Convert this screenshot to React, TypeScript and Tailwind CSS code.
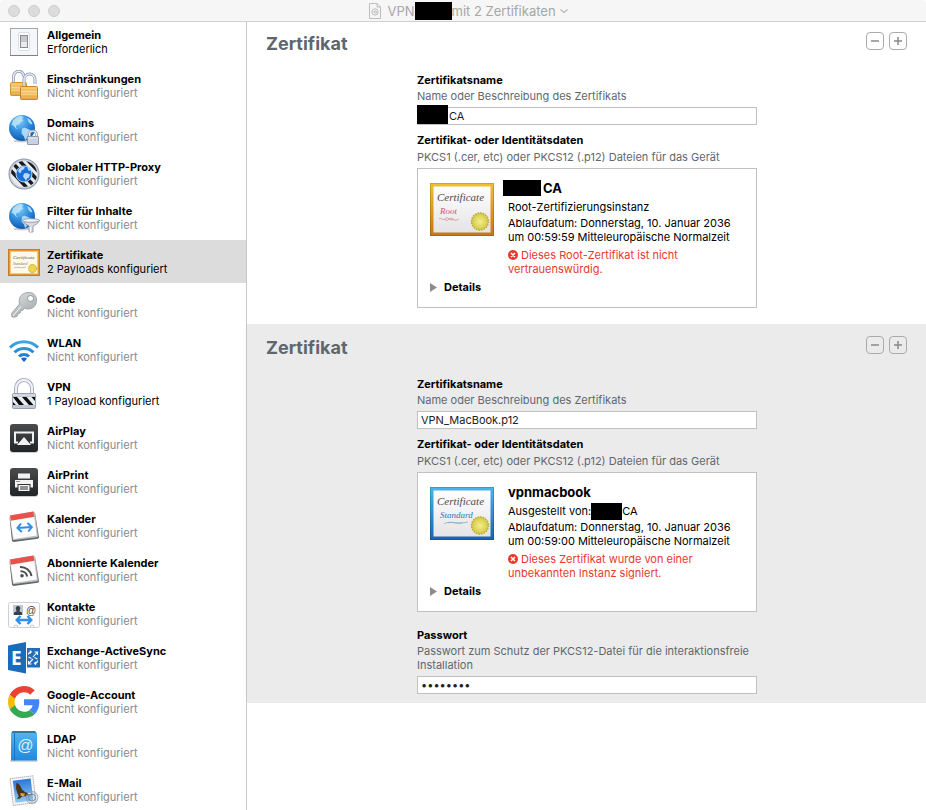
import type { ReactNode } from "react";

const continents =
  "M5 6.5c2-2.600 5-4.500 8-4.800l2.500 1.300-1.500 2 1.500 1.500-2.500 1.500-2 2.500-2.500.5-.5 2.500 2 1.500-2-.5-2.500-3-2-.5zM14 14.500l3-.8 4 1.800 2.500 1.500-1.500 3.500-2.500 1.500-1 3-1.500 1-1-3.500-2.500-3zM19 4l3 1.500 2.500 4-1.500 1-2.500-2.500z";

function Globe() {
  return (
    <>
      <defs>
        <radialGradient id="globe" cx="0.4" cy="0.25" r="0.8">
          <stop offset="0" stopColor="#7ccbf8" />
          <stop offset="0.5" stopColor="#2f8bdc" />
          <stop offset="1" stopColor="#0f55a8" />
        </radialGradient>
      </defs>
      <ellipse cx="14" cy="27" rx="9" ry="1.500" fill="#000" opacity="0.2" />
      <circle cx="14" cy="14" r="13" fill="url(#globe)" />
      <path d={continents} fill="#b9e2fb" opacity="0.9" />
    </>
  );
}

function GeneralIcon() {
  return (
    <>
      <rect x="2.500" y="2.500" width="27" height="27" fill="#f5f6f9" stroke="#a6a8ad" />
      <path d="M2 29.500h28" stroke="#7d7f84" />
      <rect x="10.500" y="6.500" width="11" height="18" rx="1.500" fill="#fdfdfd" stroke="#dcdde0" />
      <rect x="12.500" y="9.500" width="7" height="12" fill="#c5c9cc" stroke="#8a8d90" />
      <path d="M13 16h6v5h-6z" fill="#e8eaeb" />
    </>
  );
}

function RestrictionsIcon() {
  return (
    <>
      <defs>
        <linearGradient id="gold" x2="0" y2="1">
          <stop offset="0" stopColor="#f9c45c" />
          <stop offset="0.5" stopColor="#fddc94" />
          <stop offset="1" stopColor="#e69f38" />
        </linearGradient>
      </defs>
      <path d="M5.500 13V7.500a5 5.500 0 0 1 10.500-1" fill="none" stroke="#8d97ae" strokeWidth="3" />
      <path d="M5.500 13V7.500a5 5.500 0 0 1 10.500-1" fill="none" stroke="#e6eaf2" strokeWidth="1.500" />
      <rect x="2.500" y="12.500" width="16" height="13" rx="1" fill="url(#gold)" stroke="#d39332" />
      <path d="M3 16h15M3 19h15M3 22h15" stroke="#d78f2d" opacity="0.5" />
      <path d="M16 17V9.500a5.500 5.500 0 0 1 11 0V14" fill="none" stroke="#8d97ae" strokeWidth="3" />
      <path d="M16 17V9.500a5.500 5.500 0 0 1 11 0V14" fill="none" stroke="#e6eaf2" strokeWidth="1.500" />
      <rect x="12.500" y="16.500" width="17" height="13" rx="1" fill="url(#gold)" stroke="#c9852a" />
      <path d="M13 20h16M13 23h16M13 26h16" stroke="#d78f2d" opacity="0.5" />
    </>
  );
}

function DomainsIcon() {
  return (
    <>
      <Globe />
      <path d="M21.500 23v-2.500a3.500 3.500 0 0 1 7 0V23" fill="none" stroke="#8b95ab" strokeWidth="2.600" />
      <path d="M21.500 23v-2.500a3.500 3.500 0 0 1 7 0V23" fill="none" stroke="#eef1f6" strokeWidth="1.200" />
      <rect x="19.500" y="22.500" width="11" height="8" rx="0.500" fill="#c9d1e0" stroke="#8f99ae" />
      <path d="M20 24h10" stroke="#e8ecf4" />
    </>
  );
}

function ProxyIcon() {
  return (
    <>
      <defs>
        <clipPath id="proxyClip">
          <circle cx="16" cy="16" r="13" />
        </clipPath>
      </defs>
      <circle cx="16" cy="16" r="15.500" fill="#8e98aa" />
      <circle cx="16" cy="16" r="14.500" fill="#ccd2dd" />
      <circle cx="16" cy="16" r="13" fill="#e9ecee" />
      <g clipPath="url(#proxyClip)" stroke="#181b20" strokeWidth="3.500">
        <path d="M-9 0l30 32M-1-1l30 32M7-2l30 32M14-4l30 32" />
      </g>
      <circle cx="16" cy="16" r="8" fill="#1b6fd6" stroke="#b9d3f2" />
      <path
        d="M10 13c1-2.500 3-4 5-4.500l2 1-1.500 2-2 1-.5 2-1.500.5zM16 15.500l3-.5 3 1.500-1 3-2 1-1 2.500-1.500-2.500-1.500-2zM19 9l3 2 .5 2-2-.5z"
        fill="#b5ddfb"
      />
    </>
  );
}

function FilterIcon() {
  return (
    <>
      <Globe />
      <path
        d="M14.500 18.500c2 3.500 5 4.500 6.500 5.500v6h4v-6c2-1 5-2 6.500-5.500z"
        fill="#d5dae4"
        stroke="#8790a3"
        strokeWidth="0.800"
      />
      <ellipse cx="23" cy="18.500" rx="8.500" ry="1.800" fill="#f3f5f9" stroke="#8790a3" strokeWidth="0.800" />
      <path d="M22.500 25v5" stroke="#fff" strokeWidth="1.200" />
    </>
  );
}

function CertificatesIcon() {
  return (
    <>
      <rect x="0.500" y="3.500" width="31" height="26" fill="#e59a33" stroke="#c87a27" />
      <rect x="2.500" y="5.500" width="27" height="22" fill="#fdfaea" stroke="#f4c679" />
      <text x="5" y="13" fontSize="5" fontStyle="italic" fontFamily="Liberation Serif, serif" fill="#54514a">
        Certificate
      </text>
      <text x="5" y="19" fontSize="4" fontStyle="italic" fontFamily="Liberation Serif, serif" fill="#77736a">
        Standard
      </text>
      <path d="M6 22c3-2 7 1 12-1" fill="none" stroke="#9b988e" strokeWidth="0.600" />
      <circle cx="24.500" cy="22.500" r="4" fill="#ecd64a" stroke="#c3a62d" strokeDasharray="1.500 0.800" />
    </>
  );
}

function CodeIcon() {
  return (
    <>
      <defs>
        <linearGradient id="key" x2="0.600" y2="1">
          <stop offset="0" stopColor="#dfe3e3" />
          <stop offset="1" stopColor="#a5abac" />
        </linearGradient>
      </defs>
      <path
        d="M20 2.500c5-.5 8.500 3 8.500 7.500 0 6-4 9-8.500 9-1.500 0-2.500-.3-3.500-.8l-2 2.300-2 .3-.3 2.200-2.200.2-.2 2.300-2 1.500H4l-.5-3.500 8-9.500c-.5-1.500-.5-3-.2-4.500.7-4 4-6.700 8.700-7z"
        fill="url(#key)"
        stroke="#9aa0a2"
        strokeWidth="0.900"
      />
      <path d="M5 26l8-9.500" stroke="#f3f5f5" />
      <circle cx="22.500" cy="8.500" r="3" fill="#fff" stroke="#8d9496" />
    </>
  );
}

function WifiIcon() {
  return (
    <>
      <defs>
        <linearGradient id="wifi" x1="0" y1="5" x2="0" y2="28" gradientUnits="userSpaceOnUse">
          <stop offset="0" stopColor="#3fb2e8" />
          <stop offset="1" stopColor="#1668c8" />
        </linearGradient>
      </defs>
      <g fill="none" stroke="url(#wifi)" strokeWidth="3">
        <path d="M2 13.500a20 20 0 0 1 28 0" />
        <path d="M6.500 18.300a13.500 13.500 0 0 1 19 0" />
        <path d="M11 22.500a7.200 7.200 0 0 1 10 0" />
      </g>
      <path d="M16 28l-3-3.200a4.200 4.200 0 0 1 6 0z" fill="#1668c8" />
    </>
  );
}

function VpnIcon() {
  return (
    <>
      <defs>
        <clipPath id="vpnClip">
          <rect x="5" y="19" width="22" height="8" />
        </clipPath>
      </defs>
      <path d="M8 16v-5.500a8 8.500 0 0 1 16 0V16" fill="none" stroke="#9da4b1" strokeWidth="4" />
      <path d="M8 16v-5.500a8 8.500 0 0 1 16 0V16" fill="none" stroke="#eef0f5" strokeWidth="2.400" />
      <rect x="4.500" y="15.500" width="23" height="15" rx="1" fill="#c0c7d4" stroke="#98a0af" />
      <path d="M5 17h22" stroke="#e7ebf2" />
      <rect x="5" y="19" width="22" height="8" fill="#e9edee" />
      <path d="M5 19h4l7 8h-5zM14 19h4.500l7 8H21zM5 24l3 3H5zM23.500 19H27v4z" fill="#0b0c0e" clipPath="url(#vpnClip)" />
    </>
  );
}

function DarkTile() {
  return (
    <>
      <defs>
        <linearGradient id="tile" x2="0" y2="1">
          <stop offset="0" stopColor="#4a4b4c" />
          <stop offset="1" stopColor="#232425" />
        </linearGradient>
      </defs>
      <rect x="2" y="3" width="28" height="28" rx="3" fill="#999" opacity="0.5" />
      <rect x="2" y="2" width="28" height="28" rx="3" fill="url(#tile)" />
    </>
  );
}

function AirPlayIcon() {
  return (
    <>
      <DarkTile />
      <path d="M10 20.500H7v-10h18v10h-3" fill="none" stroke="#f2f2f2" strokeWidth="2" />
      <path d="M16 15l7 8H9z" fill="#f2f2f2" />
    </>
  );
}

function AirPrintIcon() {
  return (
    <>
      <DarkTile />
      <path d="M10 7.500h12v5H10z" fill="#f2f2f2" />
      <path d="M7 14h18v7.500h-2.500V18h-13v3.500H7z" fill="#f2f2f2" />
      <path d="M8.500 15.500h1M10.500 15.500h1" stroke="#333" />
      <path d="M10.500 19h11v6h-11z" fill="#f2f2f2" />
      <path d="M12 21h8M12 23h8" stroke="#333" />
    </>
  );
}

function CalendarPage({ children }: { children: ReactNode }) {
  return (
    <>
      <path d="M1.500 7.500L4 31l1.500 1L30 28.800l1-1.300L27 3z" fill="#64676a" />
      <path d="M1.500 5.500L25.500 1.500l1.500 1L30 26.500l-.8.800L5 30.200z" fill="#bfc1c3" />
      <path d="M2 6L25.500 2l3.300 23.500L5.500 29z" fill="#fcfcfc" />
      <path d="M2 5.500L25.500 1.500l.8 5.200L2.800 10.800z" fill="#e5534b" />
      {children}
    </>
  );
}

function CalendarIcon() {
  return (
    <CalendarPage>
      <path
        d="M10 18l13.500-1M13 13.500L9.500 18l4.300 4M19.500 13l4.300 4-3.500 4.500"
        fill="none"
        stroke="#2f8eea"
        strokeWidth="2"
      />
    </CalendarPage>
  );
}

function SubscribedCalendarIcon() {
  return (
    <CalendarPage>
      <circle cx="14" cy="21.700" r="1.800" fill="#4d4f52" />
      <path d="M12.500 17.200a6.500 6.500 0 0 1 6.700 5.300M12 13a11 11 0 0 1 11.500 9" fill="none" stroke="#4d4f52" strokeWidth="2" />
    </CalendarPage>
  );
}

function ContactsIcon() {
  return (
    <>
      <rect x="0.500" y="4.500" width="31" height="25" rx="2" fill="#fdfdfd" stroke="#cfcfcf" />
      <path d="M5 7h10v10H5z" fill="#bcc8d1" />
      <path d="M10 8c1.500 0 2.300 1 2.200 2.500-.1 1.300-.7 2-.9 2.700l2.700 1.300V17H6v-2.500l2.700-1.300c-.2-.7-.8-1.400-.9-2.700C7.700 9 8.500 8 10 8z" fill="#37404a" />
      <text x="18" y="15.500" fontSize="10" fontFamily="Liberation Sans, sans-serif" fill="#444">
        @
      </text>
      <path d="M9.500 22h13M12.500 18L8.700 22l3.800 4M19.500 18l3.800 4-3.800 4" fill="none" stroke="#2f8eea" strokeWidth="2.400" />
      <path d="M6 29a2 2 0 0 1 4 0M22 29a2 2 0 0 1 4 0" fill="#fff" stroke="#bbb" strokeWidth="0.800" />
    </>
  );
}

function ExchangeIcon() {
  return (
    <>
      <path d="M19 6h13v19.500H19z" fill="#1d6fbd" />
      <path
        d="M20.500 12.500c0-2 1.300-2.500 2.800-2.500M21.800 8.500l1.500 1.500-1.500 1.500M26.500 10h3v3M29.200 10.300L25 15M29.500 18.500c0 2-1.500 2.800-3 2.800M28 19.800l-1.500 1.500L28 22.800M23.500 22h-3v-3M20.800 21.500L25 17M26.500 15.500l3 1.500M20.500 15l3 1.500"
        fill="none"
        stroke="#fff"
        strokeWidth="1.100"
      />
      <path d="M0 3.500L18 0v31.500L0 28z" fill="#1a6bba" />
      <text x="3" y="22.500" fontSize="19" fontWeight="700" fontFamily="Open Sans, sans-serif" fill="#fff">
        E
      </text>
    </>
  );
}

function GoogleIcon() {
  return (
    <svg x="0" y="0" width="32" height="32" viewBox="0 0 48 48">
      <path fill="#EA4335" d="M24 9.500c3.540 0 6.710 1.220 9.210 3.600l6.850-6.850C35.900 2.380 30.470 0 24 0 14.620 0 6.510 5.380 2.560 13.220l7.980 6.190C12.430 13.720 17.740 9.500 24 9.500z" />
      <path fill="#4285F4" d="M46.980 24.550c0-1.570-.15-3.090-.38-4.550H24v9.020h12.940c-.58 2.960-2.260 5.480-4.780 7.180l7.730 6c4.510-4.180 7.090-10.360 7.090-17.650z" />
      <path fill="#FBBC05" d="M10.530 28.590c-.48-1.450-.76-2.990-.76-4.590s.27-3.140.76-4.590l-7.980-6.190C.92 16.460 0 20.120 0 24c0 3.880.92 7.540 2.560 10.780l7.970-6.190z" />
      <path fill="#34A853" d="M24 48c6.480 0 11.930-2.130 15.890-5.810l-7.730-6c-2.150 1.450-4.920 2.300-8.160 2.300-6.260 0-11.570-4.220-13.470-9.910l-7.980 6.190C6.510 42.620 14.620 48 24 48z" />
    </svg>
  );
}

function LdapIcon() {
  return (
    <>
      <defs>
        <linearGradient id="book" x2="0" y2="1">
          <stop offset="0" stopColor="#4fb4ef" />
          <stop offset="1" stopColor="#2187dc" />
        </linearGradient>
      </defs>
      <path d="M2.500 31h27" stroke="#777" opacity="0.600" />
      <path d="M4.500 1h22.500l2 2.500H3z" fill="#2e7b9e" />
      <path d="M3 3h26v27.500H3z" fill="url(#book)" />
      <path d="M6.500 3v27.500" stroke="#1b74c4" />
      <text x="9" y="21" fontSize="16" fontStyle="italic" fontFamily="Liberation Sans, sans-serif" fill="#d9f0fd">
        @
      </text>
    </>
  );
}

function MailIcon() {
  return (
    <>
      <defs>
        <linearGradient id="sky" x2="0" y2="1">
          <stop offset="0" stopColor="#2a78dc" />
          <stop offset="1" stopColor="#8fc8f5" />
        </linearGradient>
      </defs>
      <g transform="rotate(-7 16 16)">
        <rect x="3.500" y="3" width="23" height="27" fill="#f6f6f6" stroke="#b4b4b4" strokeDasharray="1.500 0.500" />
        <rect x="6" y="5.500" width="18" height="22" fill="url(#sky)" />
        <path
          d="M9.500 8c2.500 1 3.500 3.500 4.500 7l3 3.500 5 1.500 1.500 1.500-3.500-.2-3 1.200-3.500-.5-2.500 2-3 .2 2-2.700-1-3.500c-1-3.500-.8-7 .5-10z"
          fill="#4a3418"
        />
        <path d="M12 18.500l4.500 1-1 2.500-3.500-.5z" fill="#d8a23a" />
        <path d="M19 19l3 .8.800 1.200-3-.2z" fill="#fff" />
      </g>
      <circle cx="24" cy="23.500" r="6" fill="#8fa5bd" fillOpacity="0.250" stroke="#8796a8" strokeOpacity="0.700" />
      <circle cx="24" cy="23.500" r="3.500" fill="none" stroke="#62758c" strokeOpacity="0.700" />
    </>
  );
}

const payloads = [
  { name: "Allgemein", status: "Erforderlich", Icon: GeneralIcon },
  { name: "Einschränkungen", Icon: RestrictionsIcon },
  { name: "Domains", Icon: DomainsIcon },
  { name: "Globaler HTTP-Proxy", Icon: ProxyIcon },
  { name: "Filter für Inhalte", Icon: FilterIcon },
  { name: "Zertifikate", status: "2 Payloads konfiguriert", Icon: CertificatesIcon, active: true },
  { name: "Code", Icon: CodeIcon },
  { name: "WLAN", Icon: WifiIcon },
  { name: "VPN", status: "1 Payload konfiguriert", Icon: VpnIcon },
  { name: "AirPlay", Icon: AirPlayIcon },
  { name: "AirPrint", Icon: AirPrintIcon },
  { name: "Kalender", Icon: CalendarIcon },
  { name: "Abonnierte Kalender", Icon: SubscribedCalendarIcon },
  { name: "Kontakte", Icon: ContactsIcon },
  { name: "Exchange-ActiveSync", Icon: ExchangeIcon },
  { name: "Google-Account", Icon: GoogleIcon },
  { name: "LDAP", Icon: LdapIcon },
  { name: "E-Mail", Icon: MailIcon },
];

function TitleBar() {
  return (
    <header className="relative z-10 flex h-[22px] shrink-0 items-center justify-center rounded-t border-b border-[#d0d0d0] bg-[#f6f6f6] pl-[11px]">
      <div className="absolute left-2 flex gap-2">
        <button aria-label="Schließen" className="size-3 rounded-full border border-[#cfcfcf] bg-[#dcdcdc]" />
        <button aria-label="Minimieren" className="size-3 rounded-full border border-[#cfcfcf] bg-[#dcdcdc]" />
        <button aria-label="Zoomen" className="size-3 rounded-full border border-[#cfcfcf] bg-[#dcdcdc]" />
      </div>
      <svg viewBox="0 0 12 16" className="mr-1.5 h-4 w-3" fill="none" stroke="#bdbdbd">
        <path d="M0.500 0.500h7.500l3.500 3.500v11.500h-11zM8 0.500v3.500h3.500" />
        <circle cx="6" cy="9" r="3.200" />
        <path d="M4 9.500c1-2 3-2 3.500-.5s-2 2-2 .5 2.500-1 2.500.8" />
      </svg>
      <h1 className="flex items-center text-[13px] leading-4 text-[#a6a6a6]">
        VPN
        <span className="h-[18px] w-[37px] bg-black" />
        mit 2 Zertifikaten
      </h1>
      <svg viewBox="0 0 8 6" className="ml-1 h-1.5 w-2" fill="none" stroke="#b5b5b5" strokeWidth="1.200">
        <path d="M0.500 1.500l3.500 3 3.500-3" />
      </svg>
    </header>
  );
}

function Sidebar() {
  return (
    <nav className="w-[247px] shrink-0 border-r border-[#c8c8c8] bg-white">
      {payloads.map(({ name, status, Icon, active }) => (
        <a
          key={name}
          href="#"
          className={`mb-px flex h-[43px] items-center gap-[7px] pl-2 ${active ? "bg-[#dcdcdc]" : ""}`}
        >
          <svg viewBox="0 0 32 32" className="size-8 shrink-0">
            <Icon />
          </svg>
          <span className="flex flex-col">
            <span className="font-bold">{name}</span>
            <span className={status ? "" : "text-[#8a8a8a]"}>{status ?? "Nicht konfiguriert"}</span>
          </span>
        </a>
      ))}
    </nav>
  );
}

interface Certificate {
  id: string;
  kind: "Root" | "Standard";
  fileName: ReactNode;
  title: ReactNode;
  issuer: ReactNode;
  expiry: string;
  error: string;
}

function CertificateImage({ kind }: { kind: Certificate["kind"] }) {
  const root = kind === "Root";
  return (
    <svg viewBox="0 0 64 53" className="mt-[3px] h-[53px] w-16 shrink-0">
      <defs>
        <linearGradient id={`frame${kind}`} x2="0" y2="1">
          <stop offset="0" stopColor={root ? "#efc12f" : "#46b8e8"} />
          <stop offset="1" stopColor={root ? "#c8751b" : "#1b62b4"} />
        </linearGradient>
        <linearGradient id={`paper${kind}`} x2="0" y2="1">
          <stop offset="0" stopColor="#fff" />
          <stop offset="1" stopColor="#e4e4e6" />
        </linearGradient>
        <radialGradient id={`seal${kind}`}>
          <stop offset="0" stopColor="#f5ee8c" />
          <stop offset="1" stopColor="#d6ca48" />
        </radialGradient>
      </defs>
      <rect width="64" height="53" fill={`url(#frame${kind})`} />
      <rect x="0.500" y="0.500" width="63" height="52" fill="none" stroke="#000" opacity="0.150" />
      <rect x="3.500" y="3.500" width="57" height="46" fill={`url(#paper${kind})`} />
      <text x="7" y="18" fontSize="11" fontStyle="italic" fontFamily="Liberation Serif, serif" fill="#4a4a4a">
        Certificate
      </text>
      <text
        x="10"
        y="31"
        fontSize="9"
        fontStyle="italic"
        fontFamily="Liberation Serif, serif"
        fill={root ? "#cf5557" : "#3578b0"}
      >
        {kind}
      </text>
      {root ? (
        <path d="M9 36c2-2 4 2 6 0s3-1 4 0 2-2 4 0 4 1 6 0M15 36c1 3 3 1 4 0s3 3 4 0" fill="none" stroke="#d08586" strokeWidth="0.800" />
      ) : (
        <path d="M14 37c5-4 10 1 24-2M18 36c4-2 8 1 14 0" fill="none" stroke="#7ea9cc" strokeWidth="0.800" />
      )}
      <circle cx="50" cy="38.500" r="8.300" fill="none" stroke="#b9aa31" strokeWidth="1.800" strokeDasharray="1.700 0.900" />
      <circle cx="50" cy="38.500" r="8" fill={`url(#seal${kind})`} stroke="#c5b737" strokeWidth="0.600" />
    </svg>
  );
}

function CertificateCard({ cert }: { cert: Certificate }) {
  return (
    <div className="mt-1 border border-[#c0c0c0] bg-white pt-[11px] pr-3 pb-[13px] pl-3">
      <div className="flex gap-[14px]">
        <CertificateImage kind={cert.kind} />
        <div className="min-w-0 flex-1">
          <h3 className="flex h-4 items-center text-[13px] leading-4 font-bold">{cert.title}</h3>
          <p className="mt-1 flex h-[14px] items-center">{cert.issuer}</p>
          <p className="mt-0.5">
            {`Ablaufdatum: Donnerstag, 10. Januar 2036 um ${cert.expiry} Mitteleuropäische Normalzeit`}
          </p>
          <p className="mt-1 text-[#e8392b]">
            <svg viewBox="0 0 10 10" className="mr-[3px] inline size-2.5 align-[-1px]">
              <circle cx="5" cy="5" r="5" fill="#e8392b" />
              <path d="M3 3l4 4M7 3l-4 4" stroke="#fff" strokeWidth="1.500" />
            </svg>
            {cert.error}
          </p>
        </div>
      </div>
      <button className="mt-1 flex items-center gap-[7px] font-bold">
        <svg viewBox="0 0 7 9" className="h-[9px] w-[7px]">
          <path d="M0 0l7 4.500L0 9z" fill="#8c8c8c" />
        </svg>
        Details
      </button>
    </div>
  );
}

function Field({ id, label, hint, children }: { id: string; label: string; hint: string; children: ReactNode }) {
  return (
    <div>
      <label htmlFor={id} className="block font-bold">
        {label}
      </label>
      <p className="mt-0.5 mb-1 text-[#5f676e]">{hint}</p>
      {children}
    </div>
  );
}

const inputClass = "block h-[18px] w-full border border-[#c0c0c0] bg-white px-[3px] text-[#222] outline-none";

function CertificateSection({ cert, className, children }: { cert: Certificate; className: string; children?: ReactNode }) {
  return (
    <section className={className}>
      <div className="flex h-[53px] items-start justify-between pt-3 pr-[19px] pl-[19px]">
        <h2 className="text-lg leading-6 font-bold text-[#5f676e]">Zertifikat</h2>
        <div className="flex gap-[5px]">
          {["Entfernen", "Hinzufügen"].map((action, i) => (
            <button
              key={action}
              aria-label={action}
              className="flex size-[18px] items-center justify-center rounded border border-[#ababab]"
            >
              <svg viewBox="0 0 8 8" className="size-2" stroke="#8a8a8a" strokeWidth="1.500">
                <path d={i === 0 ? "M0 4h8" : "M0 4h8M4 0v8"} />
              </svg>
            </button>
          ))}
        </div>
      </div>
      <div className="ml-[170px] w-[340px]">
        <Field id={`${cert.id}-name`} label="Zertifikatsname" hint="Name oder Beschreibung des Zertifikats">
          {cert.fileName}
        </Field>
        <h3 className="mt-2 font-bold">Zertifikat- oder Identitätsdaten</h3>
        <p className="mt-[3px] text-[#5f676e]">PKCS1 (.cer, etc) oder PKCS12 (.p12) Dateien für das Gerät</p>
        <CertificateCard cert={cert} />
        {children}
      </div>
    </section>
  );
}

const rootCert: Certificate = {
  id: "root",
  kind: "Root",
  fileName: (
    <div className="relative">
      <input id="root-name" defaultValue="CA" className={`${inputClass} pl-[31px]`} />
      <span className="absolute bottom-px left-0 h-[19px] w-[31px] bg-black" />
    </div>
  ),
  title: (
    <>
      <span className="mr-0.5 -ml-[5px] h-4 w-[38px] bg-black" />
      CA
    </>
  ),
  issuer: "Root-Zertifizierungsinstanz",
  expiry: "00:59:59",
  error: "Dieses Root-Zertifikat ist nicht vertrauenswürdig.",
};

const clientCert: Certificate = {
  id: "client",
  kind: "Standard",
  fileName: <input id="client-name" defaultValue="VPN_MacBook.p12" className={inputClass} />,
  title: "vpnmacbook",
  issuer: (
    <>
      Ausgestellt von:
      <span className="h-[17px] w-[31px] bg-black" />
      CA
    </>
  ),
  expiry: "00:59:00",
  error: "Dieses Zertifikat wurde von einer unbekannten Instanz signiert.",
};

export default function App() {
  return (
    <div className="flex h-screen flex-col overflow-hidden bg-white font-['Inter',sans-serif] text-[11px] leading-[14px] text-black">
      <TitleBar />
      <div className="-mt-0.5 flex min-h-0 flex-1">
        <Sidebar />
        <main className="min-w-0 flex-1">
          <CertificateSection cert={rootCert} className="bg-white pb-4" />
          <CertificateSection cert={clientCert} className="bg-[#ebebeb] pb-[9px]">
            <div className="mt-4">
              <Field
                id="client-password"
                label="Passwort"
                hint="Passwort zum Schutz der PKCS12-Datei für die interaktionsfreie Installation"
              >
                <input id="client-password" type="password" defaultValue="geheim12" className={inputClass} />
              </Field>
            </div>
          </CertificateSection>
        </main>
      </div>
    </div>
  );
}
